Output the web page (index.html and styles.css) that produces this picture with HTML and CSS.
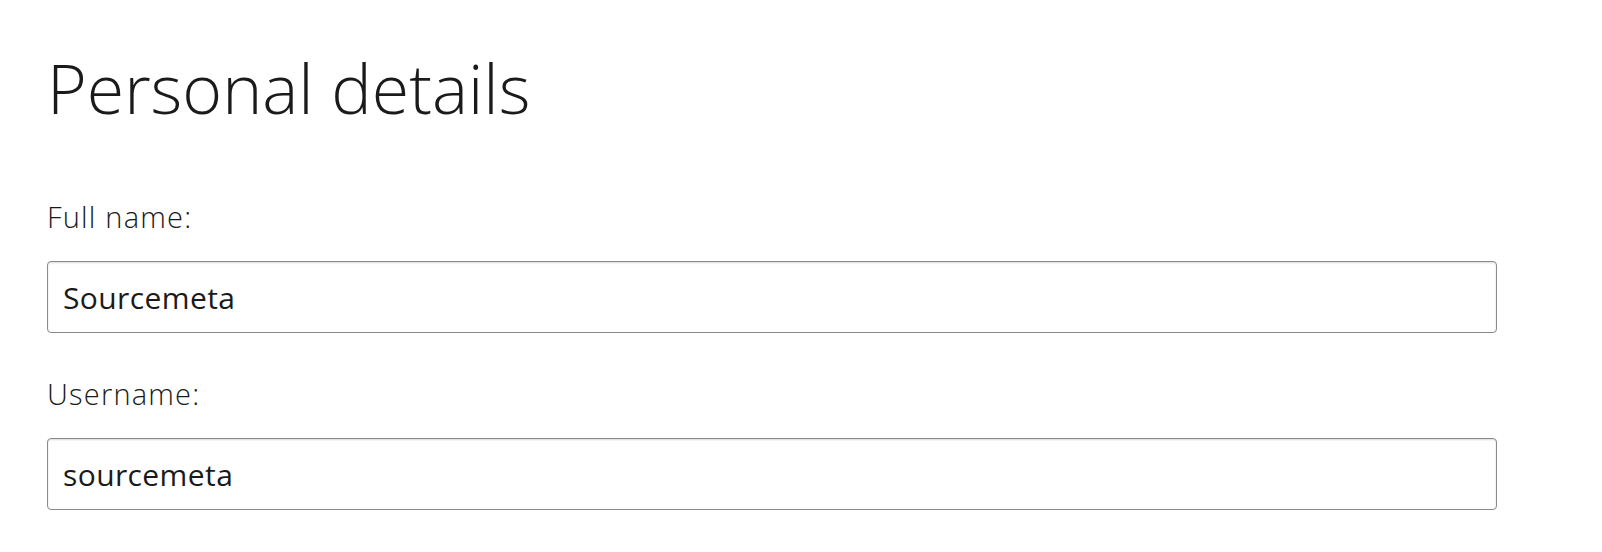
FILE: index.html
```html
<!DOCTYPE html>
<html lang="en">

<head>
  <meta charset="UTF-8">
  <meta name="viewport" content="width=device-width, initial-scale=1.0">
  <title>Personal details</title>
  <link rel="stylesheet" href="styles.css">
</head>

<body>
  <div class="container">
    <h1>Personal details</h1>
    <form class="details-form">
      <label for="full-name" class="field-label">Full name:</label>
      <input type="text" id="full-name" class="field-input" value="Sourcemeta">

      <label for="username" class="field-label">Username:</label>
      <input type="text" id="username" class="field-input" value="sourcemeta">
    </form>
  </div>
</body>

</html>
```

FILE: styles.css
```css
body {
  margin: 0;
  background-color: white;
  color: #1a1a1a;
  font-family: "Open Sans", sans-serif;
}

.container {
  padding: 52px 0 0 47px;
}

h1 {
  margin: 0 0 75px 0;
  font-size: 68px;
  line-height: 72px;
  font-weight: 300;
  color: #1a1a1a;
}

.details-form {
  display: flex;
  flex-direction: column;
  align-items: flex-start;
}

.field-label {
  font-size: 29px;
  line-height: 36px;
  font-weight: 300;
  letter-spacing: 1.2px;
  margin-bottom: 26px;
}

.field-input {
  box-sizing: border-box;
  width: 1450px;
  height: 72px;
  margin: 0 0 43px 0;
  padding: 0 15px;
  border: 1px solid #8a8a8a;
  border-radius: 4px;
  box-shadow: inset 0 1px 2px rgba(0, 0, 0, 0.15);
  font-family: "Open Sans", sans-serif;
  font-size: 30px;
  font-weight: 400;
  letter-spacing: 0.4px;
  color: #1a1a1a;
  background-color: white;
  outline: none;
}
```
